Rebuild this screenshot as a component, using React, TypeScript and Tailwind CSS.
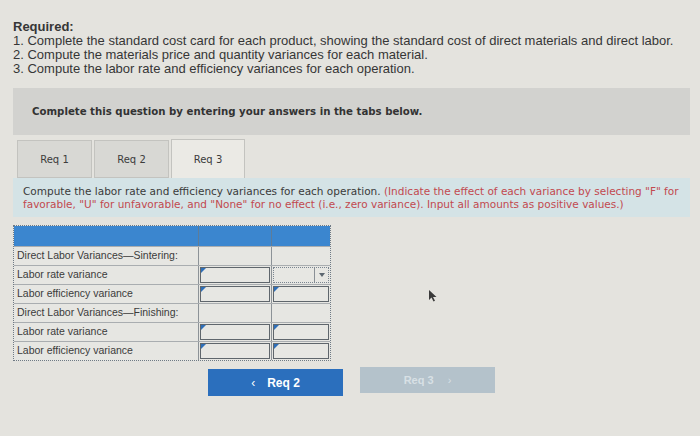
import React from "react";

function Marker() {
  return (
    <span className="absolute left-0 top-0 w-0 h-0 border-t-[5px] border-r-[5px] border-t-[#2f6fb8] border-r-transparent" />
  );
}

function InputCell({ marker = true, dropdown = false, dotted = false }: { marker?: boolean; dropdown?: boolean; dotted?: boolean }) {
  return (
    <div className="relative h-full p-[1px]">
      <div
        className={
          dotted
            ? "relative h-full border border-dotted border-[#7a8590] bg-[#e7e7e3]"
            : "relative h-full border-[1.5px] border-[#5f666c] bg-[#e7e7e3]"
        }
      >
        {marker && <Marker />}
        {dropdown && (
          <div className="absolute right-0 top-0 h-full w-[14px] border-l border-[#8a9096] flex items-center justify-center">
            <span className="w-0 h-0 border-l-[3px] border-r-[3px] border-t-[4px] border-l-transparent border-r-transparent border-t-[#5d6770]" />
          </div>
        )}
      </div>
    </div>
  );
}

const rows: { label: string; kind: "head" | "input"; first?: boolean }[] = [
  { label: "Direct Labor Variances\u2014Sintering:", kind: "head" },
  { label: "Labor rate variance", kind: "input", first: true },
  { label: "Labor efficiency variance", kind: "input" },
  { label: "Direct Labor Variances\u2014Finishing:", kind: "head" },
  { label: "Labor rate variance", kind: "input" },
  { label: "Labor efficiency variance", kind: "input" },
];

export default function App() {
  return (
    <div
      className="relative w-[700px] h-[436px] overflow-hidden bg-[#e4e3de] text-[#3a3a3a]"
      style={{ fontFamily: '"Liberation Sans", Arial, sans-serif' }}
    >
      <div className="pl-[13px] pt-[20px] text-[13px] leading-[14px] text-[#363636]">
        <div className="font-bold">Required:</div>
        <div>1. Complete the standard cost card for each product, showing the standard cost of direct materials and direct labor.</div>
        <div>2. Compute the materials price and quantity variances for each material.</div>
        <div>3. Compute the labor rate and efficiency variances for each operation.</div>
      </div>

      <div className="ml-[13px] mt-[12px] w-[677px] h-[47px] bg-[#d2d2cf] flex items-center pl-[19px]">
        <span
          className="font-bold text-[10.2px] text-[#333]"
          style={{ fontFamily: '"DejaVu Sans", Verdana, sans-serif' }}
        >
          Complete this question by entering your answers in the tabs below.
        </span>
      </div>

      <div className="ml-[17px] mt-[4px] flex items-end gap-[2px] text-[10px] text-[#3c3c3c]" style={{ fontFamily: '"DejaVu Sans", Verdana, sans-serif' }}>
        <div className="w-[75px] h-[38px] bg-[#d8d8d4] border border-[#c3c3bf] flex items-center justify-center">Req 1</div>
        <div className="w-[75px] h-[38px] bg-[#d8d8d4] border border-[#c3c3bf] flex items-center justify-center">Req 2</div>
        <div className="w-[74px] h-[39px] bg-[#ebeae5] border border-b-0 border-[#c3c3bf] flex items-center justify-center">Req 3</div>
      </div>

      <div
        className="ml-[13px] w-[677px] h-[39px] bg-[#d4e3e6] pl-[10px] pt-[7px] text-[10.5px] leading-[13px] whitespace-nowrap"
        style={{ fontFamily: '"DejaVu Sans", Verdana, sans-serif' }}
      >
        <span className="text-[#3a3a3a]">Compute the labor rate and efficiency variances for each operation. </span>
        <span className="text-[#c2494f]">
          (Indicate the effect of each variance by selecting "F" for
          <br />
          favorable, "U" for unfavorable, and "None" for no effect (i.e., zero variance). Input all amounts as positive values.)
        </span>
      </div>

      <div className="ml-[13px] mt-[8px] w-[318px] border border-dotted border-[#6f7a84] bg-[#e6e6e2]">
        <div className="grid grid-cols-[184px_73px_1fr] h-[20px] bg-[#3b86cf]">
          <div />
          <div className="border-l border-[#5d7c99]" />
          <div className="border-l border-[#5d7c99]" />
        </div>
        {rows.map((r, i) => (
          <div key={i} className="grid grid-cols-[184px_73px_1fr] h-[19px] border-t border-[#a9adb0]">
            <div className="pl-[3px] flex items-center text-[10.5px] text-[#3b3b3b] whitespace-nowrap">{r.label}</div>
            <div className="border-l border-[#8c9297]">
              {r.kind === "input" && <InputCell />}
            </div>
            <div className="border-l border-[#8c9297]">
              {r.kind === "input" && (r.first ? <InputCell marker={false} dropdown dotted /> : <InputCell />)}
            </div>
          </div>
        ))}
      </div>

      <div className="mt-[8px] flex items-start">
        <div className="ml-[208px] w-[135px] h-[27px] bg-[#2b6fbd] flex items-center justify-center gap-[12px] text-white text-[12px] font-bold">
          <span className="font-normal">&#8249;</span>
          <span>Req 2</span>
        </div>
        <div className="ml-[17px] -mt-[2px] w-[135px] h-[26px] bg-[#b4c2cb] flex items-center justify-center gap-[14px] text-[#d8e0e5] text-[11px] font-bold">
          <span>Req 3</span>
          <span className="font-normal">&#8250;</span>
        </div>
      </div>

      <svg className="absolute left-[428px] top-[290px]" width="10" height="12" viewBox="0 0 10 12">
        <path d="M1 0 L1 10 L3.5 7.5 L5.5 11.5 L7 10.8 L5 7 L8.5 7 Z" fill="#3a3a3a" />
      </svg>
    </div>
  );
}
